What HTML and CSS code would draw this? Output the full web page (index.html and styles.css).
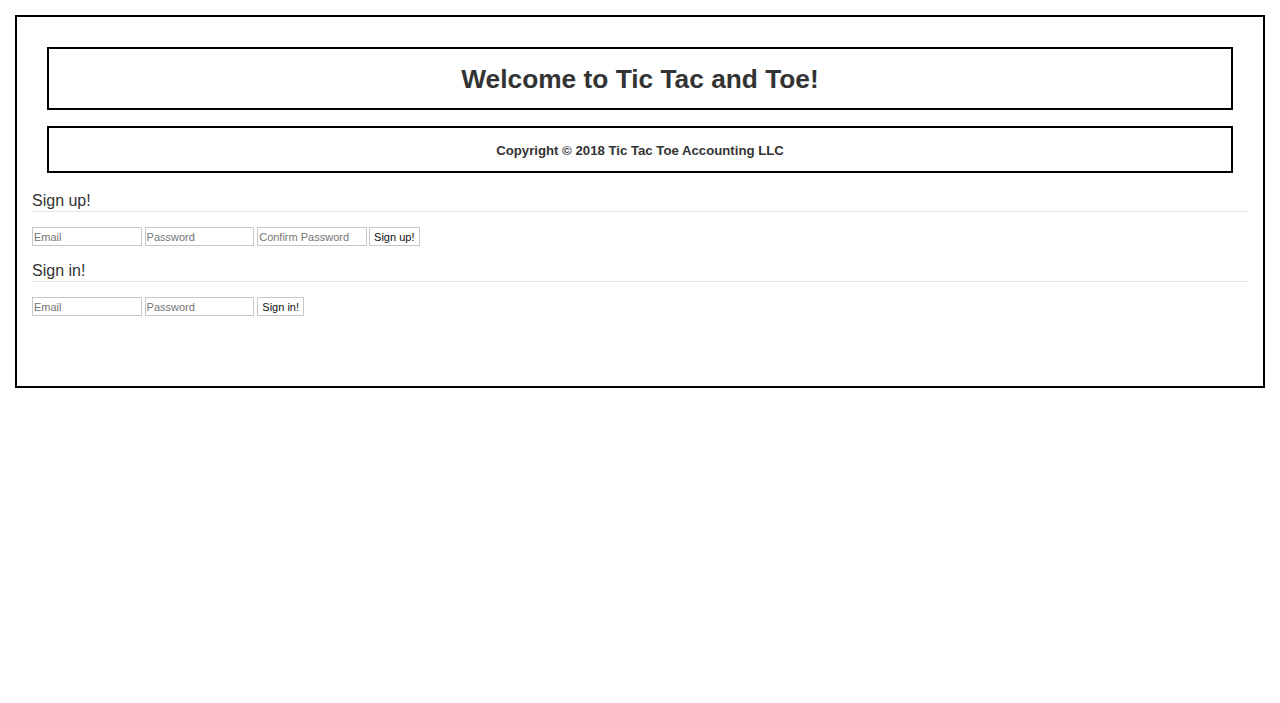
FILE: index.html
```html
<!DOCTYPE html>
<html>
<head>
<meta charset="utf-8">
<link rel="stylesheet" href="styles.css">
</head>
<body>
<div class="page">
  <header class="banner"><h1 class="title">Welcome to Tic Tac and Toe!</h1></header>
  <footer class="banner banner-foot"><p class="copy">Copyright © 2018 Tic Tac Toe Accounting LLC</p></footer>
  <section class="auth">
    <h2 class="auth-title">Sign up!</h2>
    <form class="auth-form">
      <input class="field" type="text" placeholder="Email">
      <input class="field" type="password" placeholder="Password">
      <input class="field" type="password" placeholder="Confirm Password">
      <button class="btn btn-up" type="button">Sign up!</button>
    </form>
  </section>
  <section class="auth auth-last">
    <h2 class="auth-title">Sign in!</h2>
    <form class="auth-form">
      <input class="field" type="text" placeholder="Email">
      <input class="field" type="password" placeholder="Password">
      <button class="btn btn-in" type="button">Sign in!</button>
    </form>
  </section>
</div>
</body>
</html>
```
FILE: styles.css
```css
html, body {
  margin: 0;
  padding: 0;
  background: #fff;
}
body {
  padding: 15px;
  font-family: "Liberation Sans", Arial, sans-serif;
  color: #333;
}
.page {
  border: 2px solid #000;
  padding: 15px 15px 0;
  height: 354px;
}
.banner {
  margin: 15px 15px 0;
  border: 2px solid #000;
  height: 59px;
  display: flex;
  align-items: center;
  justify-content: center;
}
.banner-foot {
  margin-top: 16px;
  height: 43px;
}
.title {
  margin: 0;
  font-size: 26.3px;
  font-weight: bold;
  line-height: 32px;
  color: #333;
}
.copy {
  margin: 0;
  font-size: 13.2px;
  font-weight: bold;
  line-height: 16px;
  color: #333;
  padding-top: 2px;
}
.auth {
  margin-top: 18px;
}
.auth + .auth {
  margin-top: 15px;
}
.auth-title {
  margin: 0;
  font-size: 16px;
  font-weight: normal;
  line-height: 20px;
  color: #333;
  border-bottom: 1px solid #e5e5e5;
}
.auth-form {
  margin: 15px 0 0;
  display: flex;
  gap: 3px;
}
.field {
  box-sizing: border-box;
  width: 109.6px;
  height: 19px;
  margin: 0;
  padding: 0 1px;
  border: 1px solid #c8c8c8;
  font-family: "Liberation Sans", Arial, sans-serif;
  font-size: 11px;
  color: #333;
  background: #fff;
}
.field::placeholder {
  color: #757575;
}
.btn {
  box-sizing: border-box;
  height: 19px;
  margin: 0 0 0 -1px;
  padding: 0;
  border: 1px solid #c8c8c8;
  background: #fff;
  font-family: "Liberation Sans", Arial, sans-serif;
  font-size: 11px;
  color: #111;
}
.btn-up {
  width: 51px;
}
.btn-in {
  width: 47px;
  margin-left: 0;
}
```
